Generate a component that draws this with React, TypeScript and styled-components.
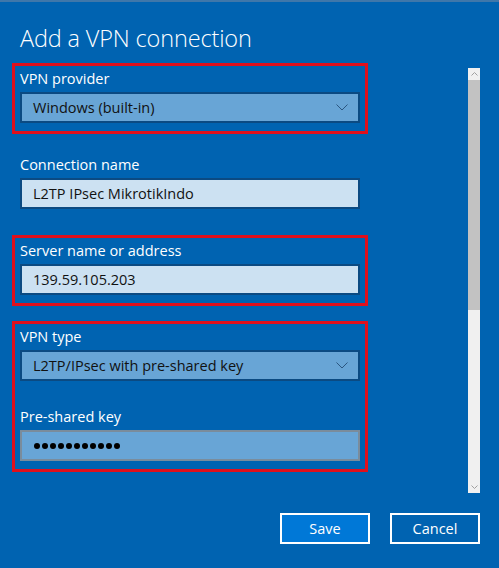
import styled, { createGlobalStyle } from "styled-components";

const GlobalStyle = createGlobalStyle`
  html, body {
    margin: 0;
    padding: 0;
    background: #0063b1;
  }
`;

const Dialog = styled.div`
  width: 499px;
  height: 568px;
  box-sizing: border-box;
  background: #0063b1;
  border-top: 2px solid #3f77aa;
  font-family: "Segoe UI", "Open Sans", "Noto Sans", sans-serif;
  color: #fff;
  display: flex;
  flex-direction: column;
  overflow: hidden;
`;

const Title = styled.h1`
  margin: 0;
  padding: 20px 0 0 20px;
  height: 41px;
  font-size: 23.5px;
  font-weight: 300;
  line-height: 32px;
  letter-spacing: -0.15px;
`;

const Body = styled.div`
  display: flex;
  align-items: flex-start;
  padding-left: 12px;
`;

const Form = styled.div`
  width: 356px;
  display: flex;
  flex-direction: column;
  gap: 15px;
`;

const Group = styled.div<{ $highlight?: boolean }>`
  border: 3px solid ${(p) => (p.$highlight ? "#e0101c" : "transparent")};
  padding: 3px 5px 8px 5px;
  display: flex;
  flex-direction: column;
`;

const Label = styled.div<{ $spaced?: boolean }>`
  font-size: 14.5px;
  line-height: 20px;
  margin-top: ${(p) => (p.$spaced ? "26px" : "0")};
  margin-bottom: 3px;
`;

const Field = styled.div<{ $kind: "select" | "text" | "secret" }>`
  box-sizing: border-box;
  width: 340px;
  height: 31px;
  display: flex;
  align-items: center;
  justify-content: space-between;
  padding: 0 10px 0 11px;
  font-size: 14.5px;
  color: #111;
  border: 2px solid
    ${(p) => (p.$kind === "secret" ? "#7a8c9c" : "#0b4a82")};
  background: ${(p) => (p.$kind === "text" ? "#cce1f2" : "#68a5d6")};
`;

const Dots = styled.div`
  display: flex;
  gap: 2px;
  padding-left: 1px;
`;

const Dot = styled.span`
  width: 6px;
  height: 6px;
  border-radius: 50%;
  background: #000;
`;

const Scrollbar = styled.div`
  margin: 5px 0 0 100px;
  width: 12px;
  height: 425px;
  background: #f0f0f0;
  display: flex;
  flex-direction: column;
`;

const ScrollArrow = styled.div`
  height: 12px;
  display: flex;
  align-items: center;
  justify-content: center;
`;

const Thumb = styled.div`
  height: 230px;
  background: #c2c2c2;
`;

const Track = styled.div`
  flex: 1;
`;

const Footer = styled.div`
  display: flex;
  justify-content: flex-end;
  gap: 20px;
  padding: 20px 19px 0 0;
`;

const Button = styled.button<{ $primary?: boolean }>`
  box-sizing: border-box;
  width: 90px;
  height: 31px;
  border: 2px solid #fff;
  background: ${(p) => (p.$primary ? "#0078d7" : "transparent")};
  color: #fff;
  font-family: inherit;
  font-size: 14.5px;
  padding: 0;
  cursor: pointer;
`;

function Chevron() {
  return (
    <svg width="12" height="7" viewBox="0 0 12 7">
      <path d="M0.5 0.5 L6 6 L11.5 0.5" fill="none" stroke="#2b5680" strokeWidth="1" />
    </svg>
  );
}

function SmallArrow({ up }: { up?: boolean }) {
  return (
    <svg width="7" height="4" viewBox="0 0 7 4">
      <path
        d={up ? "M0.5 3.5 L3.5 0.5 L6.5 3.5" : "M0.5 0.5 L3.5 3.5 L6.5 0.5"}
        fill="none"
        stroke="#a0a0a0"
        strokeWidth="1"
      />
    </svg>
  );
}

export default function App() {
  return (
    <>
      <GlobalStyle />
      <Dialog>
        <Title>Add a VPN connection</Title>
        <Body>
          <Form>
            <Group $highlight>
              <Label>VPN provider</Label>
              <Field $kind="select">
                <span>Windows (built-in)</span>
                <Chevron />
              </Field>
            </Group>
            <Group>
              <Label>Connection name</Label>
              <Field $kind="text">L2TP IPsec MikrotikIndo</Field>
            </Group>
            <Group $highlight>
              <Label>Server name or address</Label>
              <Field $kind="text">139.59.105.203</Field>
            </Group>
            <Group $highlight>
              <Label>VPN type</Label>
              <Field $kind="select">
                <span>L2TP/IPsec with pre-shared key</span>
                <Chevron />
              </Field>
              <Label $spaced>Pre-shared key</Label>
              <Field $kind="secret">
                <Dots>
                  {Array.from({ length: 11 }).map((_, i) => (
                    <Dot key={i} />
                  ))}
                </Dots>
              </Field>
            </Group>
          </Form>
          <Scrollbar>
            <ScrollArrow>
              <SmallArrow up />
            </ScrollArrow>
            <Thumb />
            <Track />
            <ScrollArrow>
              <SmallArrow />
            </ScrollArrow>
          </Scrollbar>
        </Body>
        <Footer>
          <Button $primary>Save</Button>
          <Button>Cancel</Button>
        </Footer>
      </Dialog>
    </>
  );
}
